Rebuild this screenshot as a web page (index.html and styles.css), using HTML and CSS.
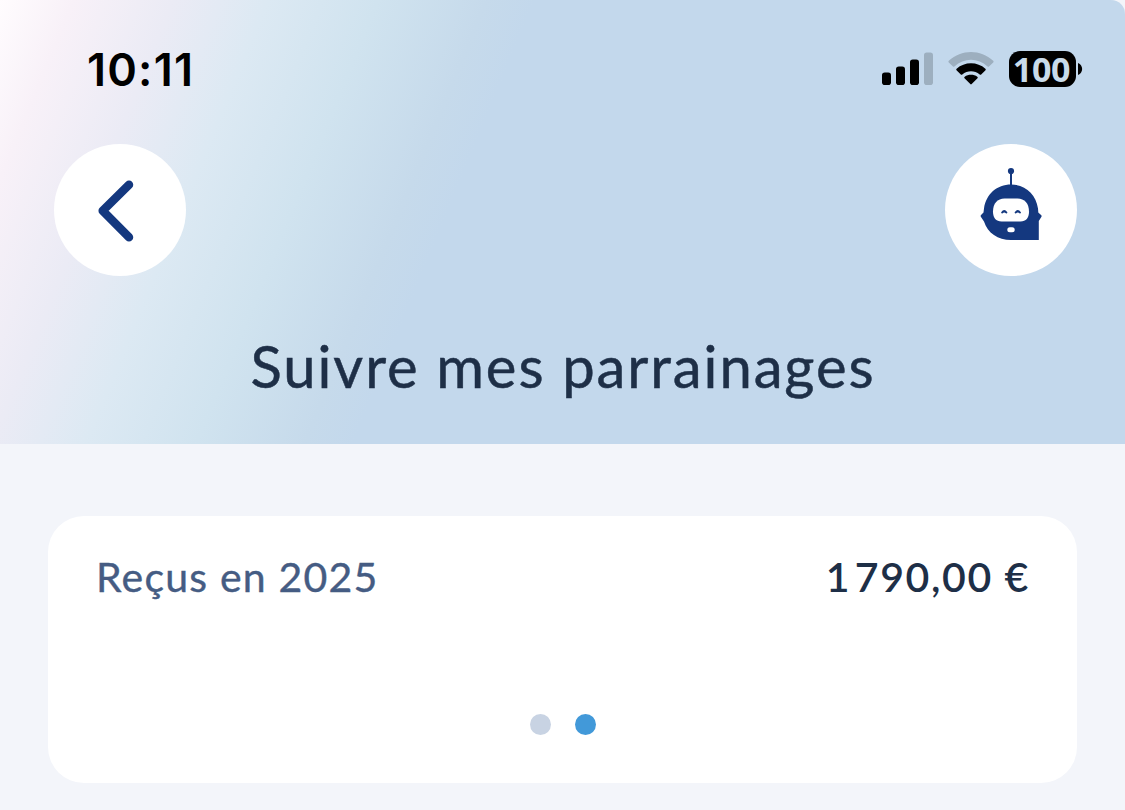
FILE: index.html
```
<!DOCTYPE html>
<html lang="fr">
<head>
    <meta charset="UTF-8">
    <title>Suivre mes parrainages</title>
    <meta name="viewport" content="width=device-width, initial-scale=1.0">
    <link rel="stylesheet" href="styles.css">
</head>
<body>
    <header class="header">
        <div class="status-bar">
            <span class="time">10:11</span>
            <div class="status-icons">
                <svg class="signal" width="52" height="34" viewBox="0 0 52 34">
                    <rect x="0" y="20.5" width="9" height="12.5" rx="2.8"/>
                    <rect x="14" y="14.5" width="9" height="18.5" rx="2.8"/>
                    <rect x="28" y="7.5" width="9" height="25.5" rx="2.8"/>
                    <rect class="faded" x="42" y="0.5" width="9" height="32.5" rx="2.8"/>
                </svg>
                <svg class="wifi" width="46" height="34" viewBox="0 0 46 34">
                    <path class="faded" d="M0.8 10.4Q0 9.6 .8 8.8C13.5 -2.8 32.5 -2.8 45.2 8.8Q46 9.6 45.2 10.4L41 14.5Q40.4 15.1 39.6 14.4C30 5.6 16 5.6 6.4 14.4Q5.6 15.1 5 14.5Z"/>
                    <path d="M8.5 18.3Q7.8 17.6 8.6 16.8C16.5 9.4 29.5 9.4 37.4 16.8Q38.2 17.6 37.5 18.3L33.2 22.5Q32.5 23.2 31.7 22.5C26.6 18.2 19.4 18.2 14.3 22.5Q13.5 23.2 12.8 22.5Z"/>
                    <path d="M16.5 26.3Q15.7 25.5 16.7 24.8C20.3 22.2 25.7 22.2 29.3 24.8Q30.3 25.5 29.5 26.3L23.7 32.1Q23 32.8 22.3 32.1Z"/>
                </svg>
                <div class="battery">
                    <span class="battery-level">100</span>
                    <svg class="battery-tip" width="5" height="12" viewBox="0 0 5 12">
                        <path d="M0 0C5.5 2 5.5 10 0 12Z"/>
                    </svg>
                </div>
            </div>
        </div>
        <nav class="nav">
            <button class="round-button" aria-label="Retour">
                <svg width="132" height="132" viewBox="0 0 132 132">
                    <path class="chevron" d="M75 40.8L48.7 66.8L75 93.2"/>
                </svg>
            </button>
            <button class="round-button" aria-label="Assistant">
                <svg class="robot" width="132" height="132" viewBox="0 0 132 132">
                    <circle cx="66" cy="27" r="3.1"/>
                    <rect x="65" y="28" width="2" height="14"/>
                    <path d="M66 40.5C80 40.5 91 50 93 64.5L93.3 68.5L96.3 71.2Q97 72 96.3 73L93.8 77V96H66C53 96 42.5 89 39 77.5L36 73Q35.3 72 36 71L38.5 68.5L39 64.5C41 50 52 40.5 66 40.5Z"/>
                    <path class="face" d="M59.5 54.5H72.5C79.5 54.5 84 59.5 84 67.5C84 74 81 77.5 75.5 77.5H56.5C51 77.5 48 74 48 67.5C48 59.5 52.5 54.5 59.5 54.5Z"/>
                    <path class="eye" d="M57.2 68.5Q59.2 65.5 61.3 68.5M70.7 68.5Q72.8 65.5 74.9 68.5"/>
                    <rect class="face" x="62.3" y="83.3" width="7.4" height="5" rx="2.5"/>
                </svg>
            </button>
        </nav>
        <h1 class="title">Suivre mes parrainages</h1>
    </header>

    <main class="content">
        <section class="card">
            <div class="row">
                <span class="label">Reçus en 2025</span>
                <span class="amount"><span class="thousands">1 </span>790,00 €</span>
            </div>
            <div class="dots">
                <span class="dot"></span>
                <span class="dot active"></span>
            </div>
        </section>
    </main>
</body>
</html>
```
FILE: styles.css
```
* {
  box-sizing: border-box;
}

html {
  background-color: #fff;
}

body {
  margin: 0;
  height: 810px;
  overflow: hidden;
  background-color: #f3f5fa;
  font-family: Lato, "Liberation Sans", sans-serif;
}

.header {
  height: 444px;
  background: linear-gradient(112.3deg, #fffcfe 0, #f8f1f8 68px, #ebebf5 160px, #dce9f3 248px, #d0e3ef 350px, #c6daeb 450px, #c3d8ec 495px);
  border-top-right-radius: 14px;
}

.status-bar {
  display: flex;
  justify-content: space-between;
  align-items: center;
  height: 144px;
  padding: 0 42px 6px 87px;
}

.time {
  font-family: Inter, sans-serif;
  font-size: 45px;
  font-weight: 600;
  letter-spacing: 1.2px;
  color: #000;
}

.status-icons {
  display: flex;
  align-items: center;
}

.wifi {
  margin-left: 14px;
}

.faded {
  fill: #9dafbf;
}

.battery {
  display: flex;
  align-items: center;
  margin-left: 15px;
}

.battery-level {
  width: 67px;
  height: 36px;
  border-radius: 11px;
  background-color: #000;
  color: #c9dbea;
  font-family: "Open Sans", sans-serif;
  font-size: 34px;
  font-weight: 700;
  line-height: 36px;
  letter-spacing: -0.3px;
  text-align: center;
  text-indent: -2px;
}

.battery-tip {
  margin-left: 2px;
}

.nav {
  display: flex;
  justify-content: space-between;
  padding: 0 48px 0 54px;
}

.round-button {
  width: 132px;
  height: 132px;
  padding: 0;
  border: none;
  border-radius: 50%;
  background-color: #fff;
}

.round-button svg {
  display: block;
}

.chevron {
  fill: none;
  stroke: #14387f;
  stroke-width: 8.5;
  stroke-linecap: round;
  stroke-linejoin: round;
}

.robot {
  fill: #14387f;
}

.face {
  fill: #fff;
}

.eye {
  fill: #14387f;
  stroke: #14387f;
  stroke-width: 2;
  stroke-linecap: round;
}

.title {
  margin: 54px 0 0;
  color: #1e2f47;
  font-size: 58px;
  font-weight: 400;
  line-height: 72px;
  letter-spacing: 1.9px;
  text-align: center;
  text-indent: 1px;
  -webkit-text-stroke: 0.5px #1e2f47;
}

.content {
  padding: 72px 48px 0;
}

.card {
  height: 267px;
  padding: 36px 48px 0;
  border-radius: 36px;
  background-color: #fff;
}

.row {
  display: flex;
  justify-content: space-between;
  line-height: 50px;
}

.label {
  color: #455c83;
  font-size: 41px;
  letter-spacing: 1.2px;
  -webkit-text-stroke: 0.4px #455c83;
}

.amount {
  margin-right: -1px;
  color: #1e2f47;
  font-size: 41px;
  font-weight: 600;
  letter-spacing: 1.6px;
}

.thousands {
  word-spacing: -8px;
}

.dots {
  display: flex;
  justify-content: center;
  gap: 24px;
  margin-top: 112px;
}

.dot {
  width: 21px;
  height: 21px;
  border-radius: 50%;
  background-color: #c8d3e3;
}

.dot.active {
  background-color: #4299d9;
}
```
